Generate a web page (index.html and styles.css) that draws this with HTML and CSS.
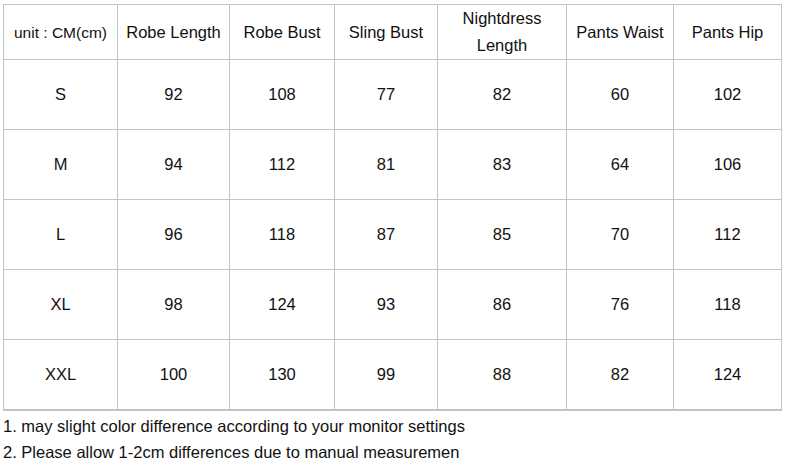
FILE: index.html
```html
<!DOCTYPE html>
<html>
<head>
<meta charset="utf-8">
<link rel="stylesheet" href="styles.css">
</head>
<body>
<div class="page">
  <table class="size-table">
    <colgroup>
      <col class="c1"><col class="c2"><col class="c3"><col class="c4"><col class="c5"><col class="c6"><col class="c7">
    </colgroup>
    <thead>
      <tr class="head">
        <th class="unit">unit : CM(cm)</th>
        <th>Robe Length</th>
        <th>Robe Bust</th>
        <th>Sling Bust</th>
        <th>Nightdress<br>Length</th>
        <th>Pants Waist</th>
        <th>Pants Hip</th>
      </tr>
    </thead>
    <tbody>
      <tr><td>S</td><td>92</td><td>108</td><td>77</td><td>82</td><td>60</td><td>102</td></tr>
      <tr><td>M</td><td>94</td><td>112</td><td>81</td><td>83</td><td>64</td><td>106</td></tr>
      <tr><td>L</td><td>96</td><td>118</td><td>87</td><td>85</td><td>70</td><td>112</td></tr>
      <tr><td>XL</td><td>98</td><td>124</td><td>93</td><td>86</td><td>76</td><td>118</td></tr>
      <tr class="last"><td>XXL</td><td>100</td><td>130</td><td>99</td><td>88</td><td>82</td><td>124</td></tr>
    </tbody>
  </table>
  <div class="notes">
    <p>1. may slight color difference according to your monitor settings</p>
    <p>2. Please allow 1-2cm differences due to manual measuremen</p>
  </div>
</div>
</body>
</html>
```
FILE: styles.css
```css
html, body {
  margin: 0;
  padding: 0;
  background: #fff;
}
body {
  font-family: "Liberation Sans", Arial, sans-serif;
  color: #111;
}
.page {
  padding: 4px 0 0 3px;
}
.size-table {
  border-collapse: collapse;
  table-layout: fixed;
  width: 778px;
}
.c1 { width: 114px; }
.c2 { width: 112px; }
.c3 { width: 105px; }
.c4 { width: 103px; }
.c5 { width: 129px; }
.c6 { width: 107px; }
.c7 { width: 108px; }
.size-table th,
.size-table td {
  border: 1px solid #c4c4c4;
  text-align: center;
  vertical-align: middle;
  padding: 0;
  font-size: 16.5px;
  font-weight: normal;
  color: #111;
}
.size-table th {
  line-height: 27px;
}
.head th {
  height: 54px;
}
.size-table th.unit {
  font-size: 15.5px;
}
.size-table tbody td {
  height: 69px;
}
.size-table tr.last td {
  border-bottom: 2px solid #c4c4c4;
}
.notes {
  font-size: 16.5px;
  color: #111;
  padding-top: 2px;
}
.notes p {
  margin: 0;
  line-height: 26px;
}
```
